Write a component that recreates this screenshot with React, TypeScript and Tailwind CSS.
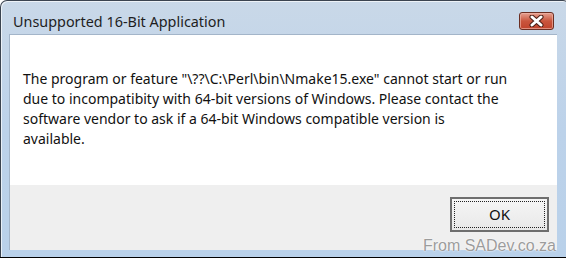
import React from "react";

function CloseGlyph() {
  return (
    <svg width="15" height="12" viewBox="0 0 15 12">
      <path d="M3 2 L12 10 M12 2 L3 10" stroke="#4a1d14" strokeWidth="5" strokeLinecap="round" />
      <path d="M3 2 L12 10 M12 2 L3 10" stroke="#ffffff" strokeWidth="3" strokeLinecap="round" />
    </svg>
  );
}

export default function App() {
  const body = { fontFamily: '"Noto Sans", "Open Sans", sans-serif' };
  return (
    <div className="w-[566px] h-[258px] relative overflow-hidden bg-white">
      {/* window frame */}
      <div className="w-[570px] h-[258px] flex flex-col rounded-t-[7px] border border-[#3b4450] border-b-0 bg-gradient-to-b from-[#c9d8e8] via-[#bcd2ea] to-[#b9d1ea] shadow-[inset_1px_1px_0_#ffffffaa]">
        {/* title bar */}
        <div className="h-[33px] flex items-start pl-[12px] pr-[15px]">
          <span className="flex-1 text-[14.4px] leading-[20px] text-[#1e1e1e] pt-[11px]" style={body}>
            Unsupported 16-Bit Application
          </span>
          <button className="w-[35px] h-[18px] mt-[11px] flex items-center justify-center rounded-[3px] border border-[#6b2e22] bg-gradient-to-b from-[#e5a091] via-[#c9553d] to-[#c0432c] shadow-[inset_0_0_0_1px_#eeb4a6aa]">
            <CloseGlyph />
          </button>
        </div>

        {/* client area */}
        <div className="mx-[8px] mr-[12px] flex flex-col border border-[#a3b5c9] border-b-0 border-r-0">
          <div className="h-[150px] bg-white pl-[13px] pt-[34px] text-[14px] leading-[20px] text-[#111] whitespace-nowrap" style={body}>
            <p>The program or feature "\??\C:\Perl\bin\Nmake15.exe" cannot start or run</p>
            <p>due to incompatibity with 64-bit versions of Windows. Please contact the</p>
            <p>software vendor to ask if a 64-bit Windows compatible version is</p>
            <p>available.</p>
          </div>
          <div className="h-[65px] bg-[#efefef] flex justify-end items-start pt-[12px] pr-[8px]">
            <button className="w-[99px] h-[35px] border-2 border-[#6e6e6e] bg-gradient-to-b from-[#f6f6f6] to-[#e8e8e8] p-[2px]">
              <span className="w-full h-full flex items-center justify-center border border-dotted border-[#222] text-[15px] text-[#111]" style={body}>
                OK
              </span>
            </button>
          </div>
        </div>

        <div className="flex-1 border-b border-[#2ac3e8]" />
      </div>
      <div className="h-px bg-black absolute left-0 right-0 bottom-0" />

      {/* watermark over the frame */}
      <span
        className="absolute right-[10px] bottom-[3px] text-[16px] leading-[18px] text-[#9c9c9c] [text-shadow:0_0_2px_#fff,0_0_1px_#fff]"
        style={{ fontFamily: '"Liberation Sans", Arial, sans-serif' }}
      >
        From SADev.co.za
      </span>
    </div>
  );
}
